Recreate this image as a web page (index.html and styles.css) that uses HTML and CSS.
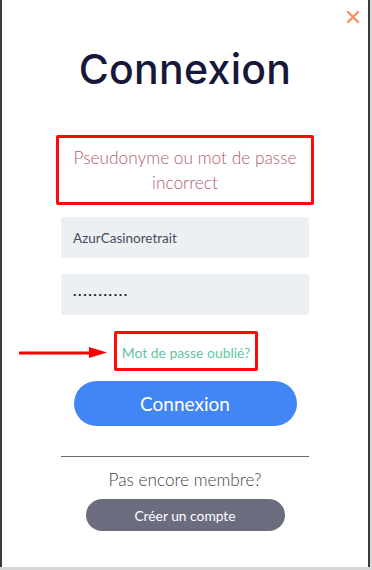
FILE: index.html
```html
<!DOCTYPE html>
<html lang="fr">
<head>
<meta charset="utf-8">
<title>Connexion</title>
<link rel="stylesheet" href="styles.css">
</head>
<body>
<div class="modal">
  <svg class="close" width="14" height="14" viewBox="0 0 14 14"><path d="M2 2 L12 12 M12 2 L2 12" stroke="#f0945f" stroke-width="2.4" stroke-linecap="round"/></svg>
  <h1 class="title">Connexion</h1>
  <div class="error">Pseudonyme ou mot de passe incorrect</div>
  <div class="input">AzurCasinoretrait</div>
  <div class="input pass">•••••••••••</div>
  <div class="forgot-row">
    <svg class="arrow" width="90" height="14" viewBox="0 0 90 14"><line x1="1" y1="7" x2="74" y2="7" stroke="#f00" stroke-width="3" stroke-linecap="round"/><polygon points="70,1 88,6.5 70,12" fill="#f00"/></svg>
    <div class="forgot">Mot de passe oublié?</div>
  </div>
  <div class="btn-primary">Connexion</div>
  <div class="sep"></div>
  <div class="member">Pas encore membre?</div>
  <div class="btn-secondary">Créer un compte</div>
</div>
</body>
</html>
```

FILE: styles.css
```css
html, body { margin: 0; padding: 0; background: #d6d6d6; }
body { width: 372px; height: 570px; overflow: hidden; }
.modal {
  position: relative;
  box-sizing: border-box;
  width: 370px;
  height: 567px;
  background: #fff;
  border-left: 2px solid #3a3a3a;
  border-right: 2px solid #3a3a3a;
  display: flex;
  flex-direction: column;
  align-items: center;
  font-family: "Lato", "Noto Sans", sans-serif;
}
.close {
  position: absolute;
  right: 8px;
  top: 10px;
}
.title {
  margin: 45px 0 0;
  font-family: "Inter", sans-serif;
  font-weight: 500;
  font-size: 41px;
  line-height: 48px;
  color: #17173a;
  letter-spacing: 0.3px;
}
.error {
  margin-top: 42px;
  box-sizing: border-box;
  width: 258px;
  height: 70px;
  border: 3px solid #ff0a0a;
  border-radius: 2px;
  display: flex;
  align-items: center;
  justify-content: center;
  text-align: center;
  padding: 0 6px;
  color: #b0616a;
  font-size: 17.3px;
  line-height: 25px;
  font-weight: 300;
}
.input {
  margin-top: 12px;
  box-sizing: border-box;
  width: 248px;
  height: 41px;
  background: #edf0f3;
  border-radius: 2px;
  padding-left: 12px;
  display: flex;
  align-items: center;
  color: #4b4b5e;
  font-size: 13.5px;
}
.input.pass { margin-top: 16px; font-size: 6px; letter-spacing: 1.6px; color: #222; }
.forgot-row {
  position: relative;
  margin-top: 16px;
  margin-left: 2px;
}
.arrow { position: absolute; left: -95px; top: 15px; }
.forgot {
  box-sizing: border-box;
  width: 144px;
  height: 40px;
  border: 3px solid #ff0a0a;
  border-radius: 2px;
  display: flex;
  align-items: center;
  justify-content: center;
  color: #5fc4a6;
  font-size: 13.9px;
  padding-top: 2px;
}
.btn-primary {
  margin-top: 10px;
  width: 223px;
  height: 45px;
  border-radius: 23px;
  background: #4286f5;
  color: #fff;
  font-size: 19px;
  display: flex;
  align-items: center;
  justify-content: center;
}
.sep {
  margin-top: 30px;
  width: 248px;
  height: 1px;
  background: #6a6a6a;
}
.member {
  margin-top: 13px;
  color: #454545;
  font-size: 17.2px;
  font-weight: 300;
  line-height: 20px;
}
.btn-secondary {
  margin-top: 9px;
  width: 199px;
  height: 32px;
  border-radius: 16px;
  background: #6c6c7f;
  color: #fff;
  font-size: 13.8px;
  display: flex;
  align-items: center;
  justify-content: center;
}
```
